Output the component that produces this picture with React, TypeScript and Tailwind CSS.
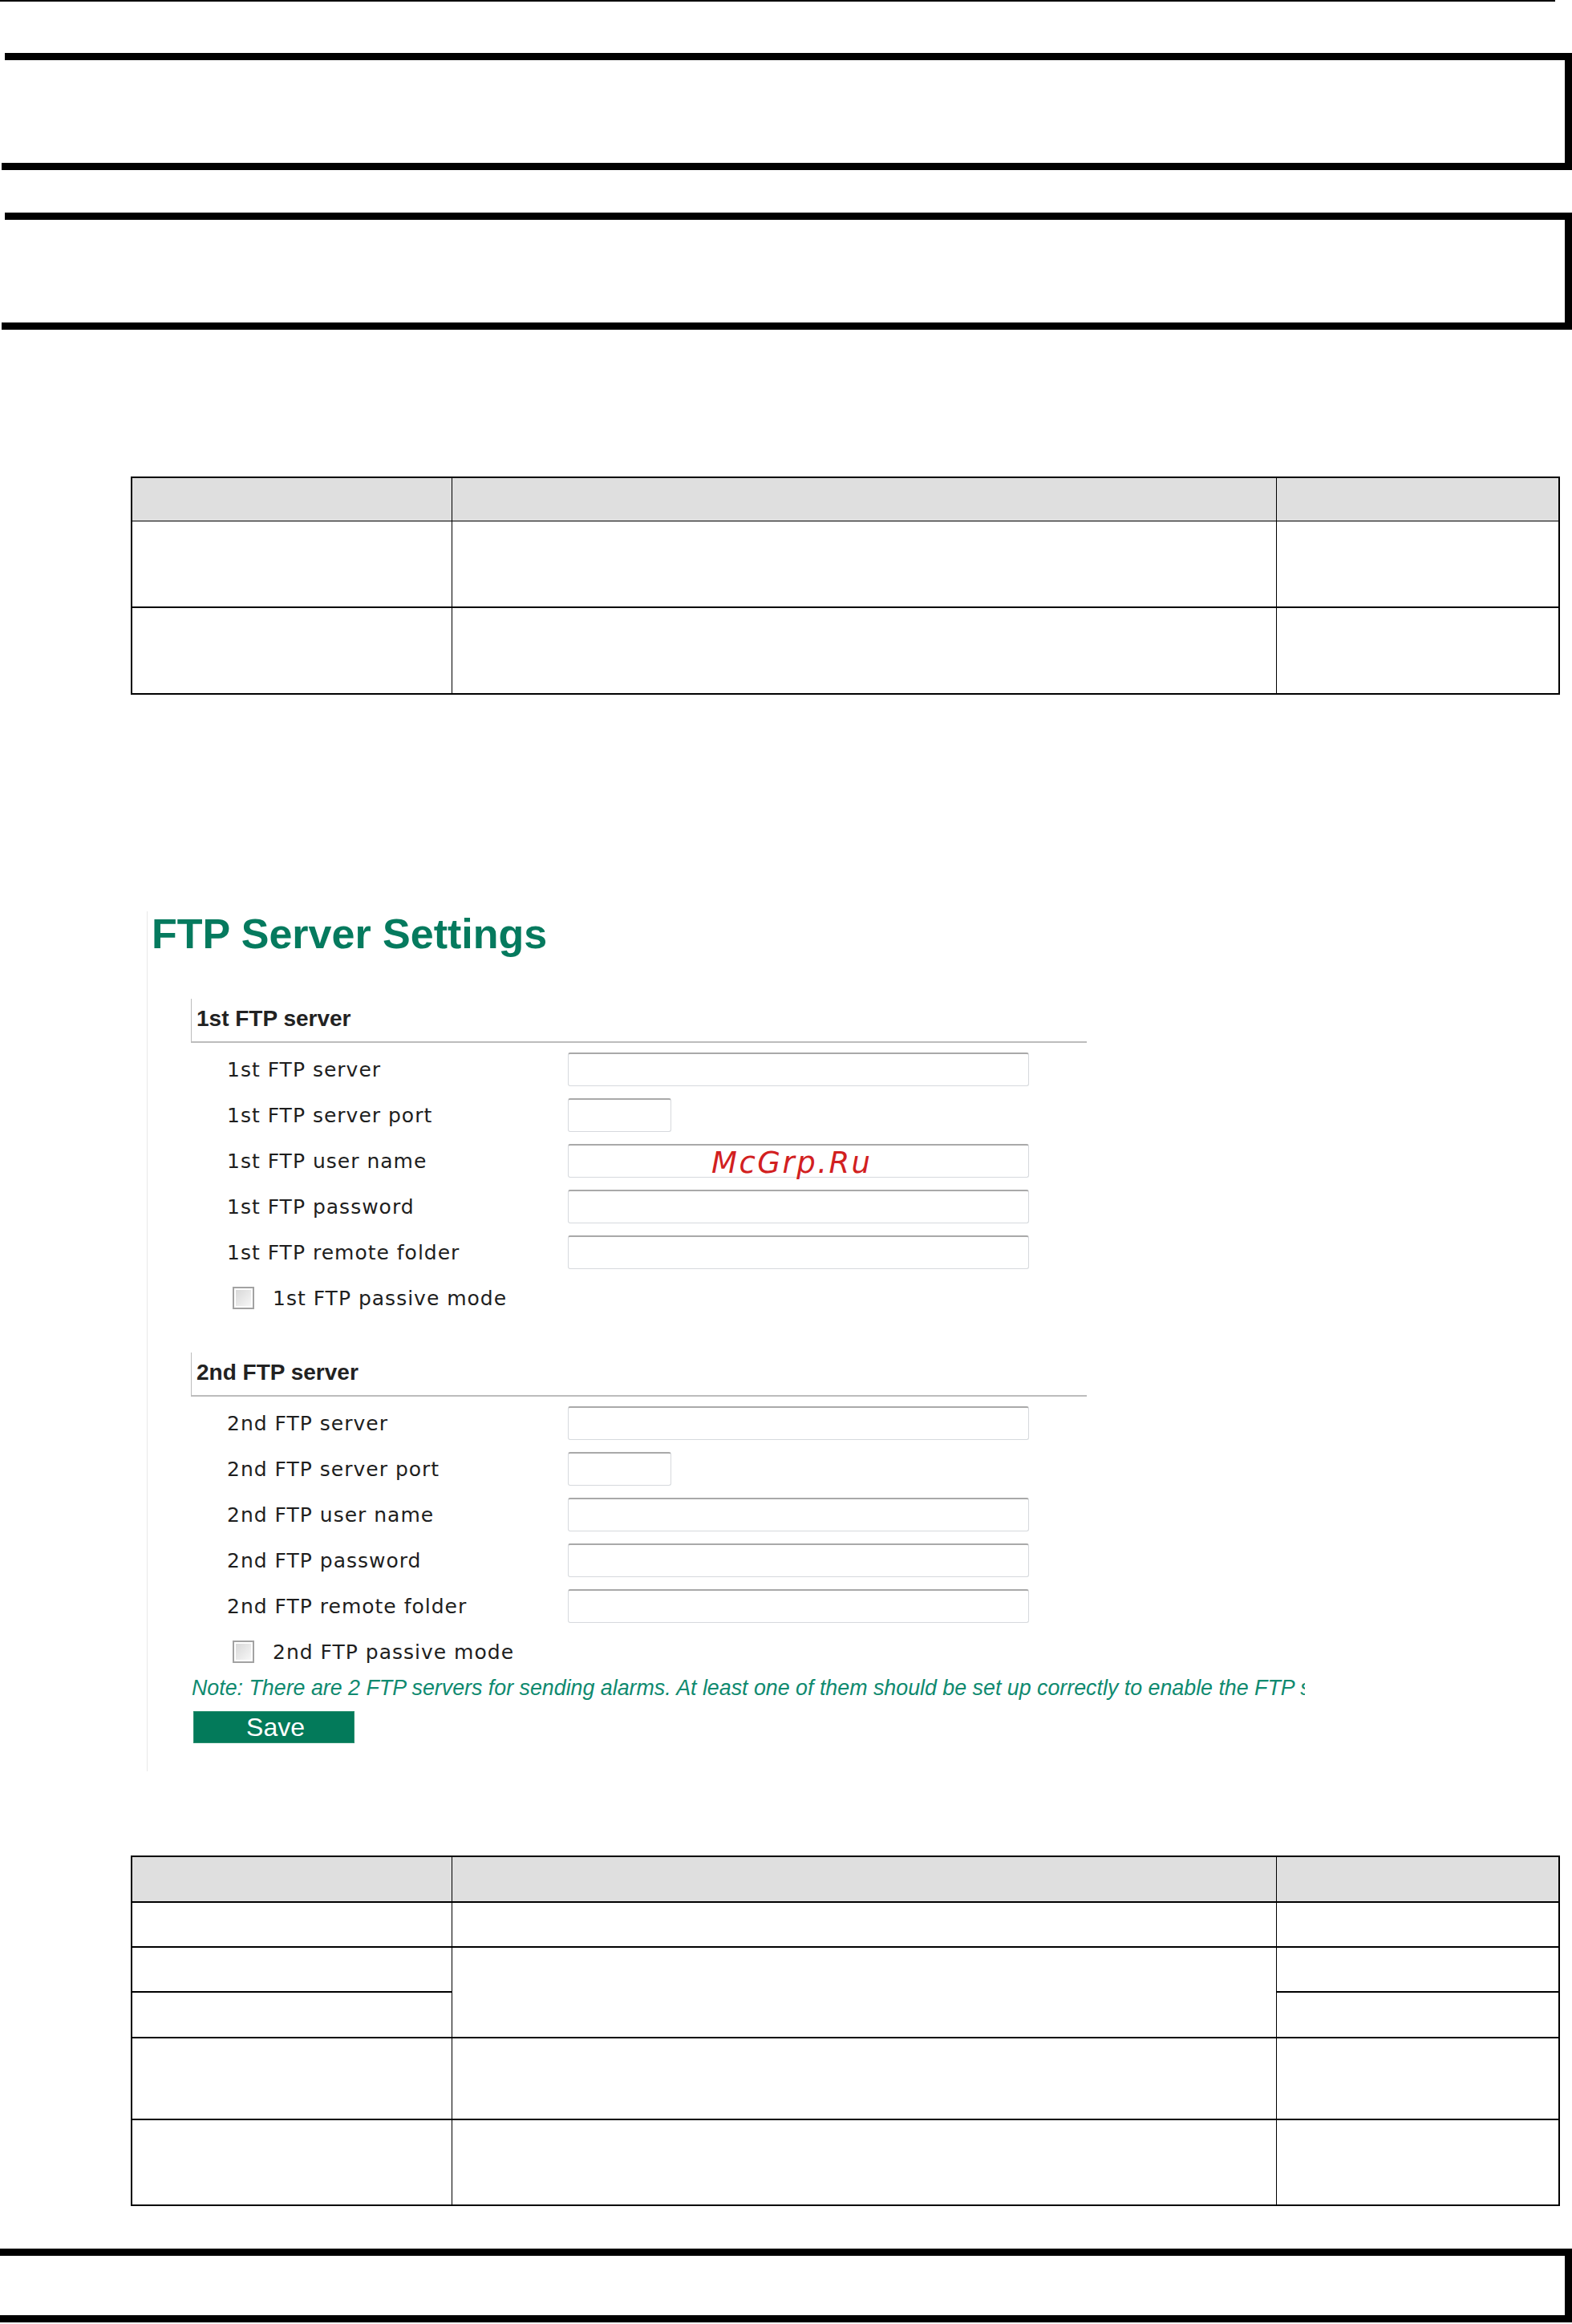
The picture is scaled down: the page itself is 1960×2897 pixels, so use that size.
import React from "react";

const labelFont = { fontFamily: '"DejaVu Sans", Verdana, sans-serif' };
const arial = { fontFamily: '"Liberation Sans", Arial, sans-serif' };

function BlackBox({ h }: { h: string }) {
  return (
    <div className={`${h} w-[1958px] ml-[2px] border-r-[9px] border-b-[9px] border-black`}>
      <div className="ml-[4px] h-[9px] bg-black" />
    </div>
  );
}

function Input({ short }: { short?: boolean }) {
  return (
    <div
      className={`${short ? "w-[129px]" : "w-[575px]"} h-[42px] rounded-[3px] border border-[#d6d9dd] border-t-2 border-t-[#a9a9a9] bg-white`}
    />
  );
}

function Checkbox() {
  return (
    <div className="w-[27px] h-[28px] border-2 border-[#a2a2a2] bg-white p-[2px]">
      <div className="w-full h-full bg-gradient-to-br from-[#d8d8d8] to-[#f7f7f7]" />
    </div>
  );
}

function Row({ label, short }: { label: string; short?: boolean }) {
  return (
    <div className="flex h-[57px] items-center pl-[99px]">
      <div className="w-[425px] pt-[2px] text-[25px] tracking-[1px] text-[#1e1e1e] whitespace-nowrap" style={labelFont}>
        {label}
      </div>
      <Input short={short} />
    </div>
  );
}

function Section({ n }: { n: string }) {
  return (
    <>
      <div className="ml-[54px] w-[1117px] h-[55px] border-l border-b-2 border-[#bcbcbc] pl-[6px] pt-[11px]">
        <div className="text-[28px] leading-none font-bold text-[#222]" style={arial}>
          {n} FTP server
        </div>
      </div>
      <div className="mt-[4px] flex flex-col">
        <Row label={`${n} FTP server`} />
        <Row label={`${n} FTP server port`} short />
        <Row label={`${n} FTP user name`} />
        <Row label={`${n} FTP password`} />
        <Row label={`${n} FTP remote folder`} />
        <div className="flex h-[57px] items-center pl-[106px]">
          <Checkbox />
          <div className="ml-[23px] pt-[2px] text-[25px] tracking-[1px] text-[#1e1e1e] whitespace-nowrap" style={labelFont}>
            {n} FTP passive mode
          </div>
        </div>
      </div>
    </>
  );
}

function Cells({ h }: { h: string }) {
  return (
    <div className={`flex ${h} border-b-2 border-black`}>
      <div className="w-[399px] border-r border-black" />
      <div className="w-[1028px] border-r border-black" />
      <div className="flex-1" />
    </div>
  );
}

export default function App() {
  return (
    <div className="relative w-[1960px] h-[2897px] bg-white overflow-hidden">
      {/* top rule */}
      <div className="w-[1939px] h-[2px] bg-black" />

      {/* box 1 */}
      <div className="mt-[64px]">
        <BlackBox h="h-[146px]" />
      </div>
      {/* box 2 */}
      <div className="mt-[53px]">
        <BlackBox h="h-[146px]" />
      </div>

      {/* table 1 */}
      <div className="mt-[183px] ml-[163px] w-[1782px] border-x-2 border-t-2 border-black">
        <div className="flex h-[54px] border-b border-black bg-[#dfdfdf]">
          <div className="w-[399px] border-r border-black" />
          <div className="w-[1028px] border-r border-black" />
          <div className="flex-1" />
        </div>
        <Cells h="h-[108px]" />
        <Cells h="h-[108px]" />
      </div>

      {/* screenshot */}
      <div className="mt-[270px] ml-[183px] w-[1444px] border-l border-[#e8e8e8] overflow-hidden pt-[2px] pb-[35px]">
        <div className="pl-[5px] text-[52px] leading-none font-bold text-[#057a5e] whitespace-nowrap" style={arial}>
          FTP Server Settings
        </div>
        <div className="mt-[55px]">
          <Section n="1st" />
        </div>
        <div className="mt-[40px]">
          <Section n="2nd" />
        </div>
        <div className="mt-[4px] ml-[55px] text-[26.8px] leading-none italic text-[#0f8a6f] whitespace-nowrap" style={arial}>
          Note: There are 2 FTP servers for sending alarms. At least one of them should be set up correctly to enable the FTP system.
        </div>
        <div className="mt-[15px] ml-[57px] w-[201px] h-[40px] bg-[#037a5a] border border-[#2a8f6f] flex items-center justify-center">
          <span className="pl-[4px] text-[32px] leading-none text-white" style={arial}>
            Save
          </span>
        </div>
      </div>

      {/* table 2 */}
      <div className="mt-[105px] ml-[163px] w-[1782px] border-x-2 border-t-2 border-black">
        <div className="flex h-[57px] border-b-2 border-black bg-[#dfdfdf]">
          <div className="w-[399px] border-r border-black" />
          <div className="w-[1028px] border-r border-black" />
          <div className="flex-1" />
        </div>
        <Cells h="h-[56px]" />
        <div className="flex h-[113px] border-b-2 border-black">
          <div className="w-[399px] border-r border-black flex flex-col">
            <div className="h-[56px] border-b-2 border-black" />
            <div className="flex-1" />
          </div>
          <div className="w-[1028px] border-r border-black" />
          <div className="flex-1 flex flex-col">
            <div className="h-[56px] border-b-2 border-black" />
            <div className="flex-1" />
          </div>
        </div>
        <Cells h="h-[102px]" />
        <Cells h="h-[107px]" />
      </div>

      {/* bottom box */}
      <div className="mt-[53px] w-[1960px] h-[92px] border-r-[9px] border-b-[9px] border-black">
        <div className="h-[9px] bg-black" />
      </div>

      {/* watermark */}
      <div
        className="absolute left-[887px] top-[1431px] text-[37px] leading-none italic tracking-[2.5px] text-[#d2201f] whitespace-nowrap"
        style={labelFont}
      >
        McGrp.Ru
      </div>
    </div>
  );
}
